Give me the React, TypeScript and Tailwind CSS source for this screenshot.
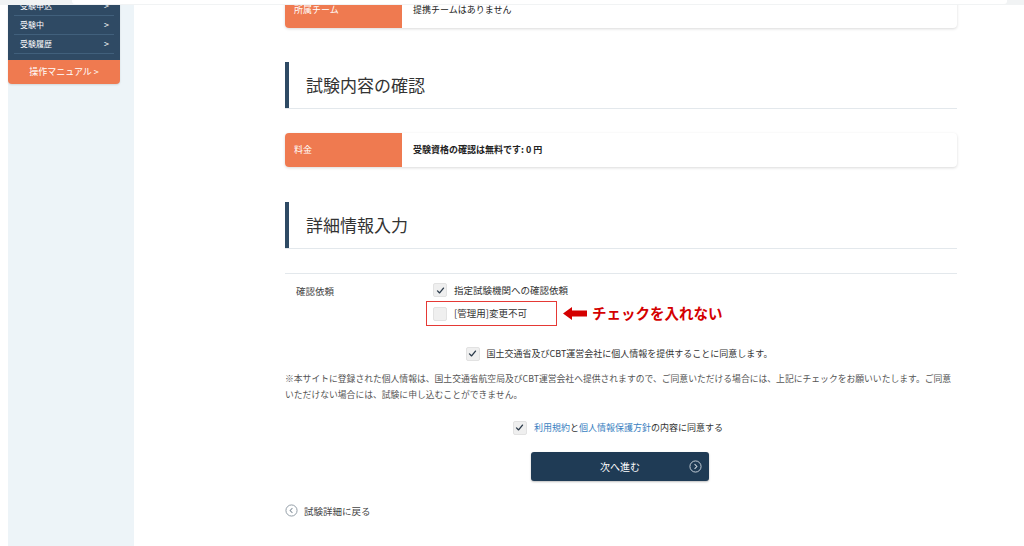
import React from "react";

const jp = {
  fontFamily: '"Noto Sans CJK JP", "Noto Sans", "Liberation Sans", sans-serif',
};

const Check = ({ checked }: { checked: boolean }) => (
  <span className="flex h-[14px] w-[14px] shrink-0 items-center justify-center rounded-[2px] border border-[#e2e2e2] bg-[#efefef]">
    {checked && (
      <svg viewBox="0 0 12 12" className="h-[9px] w-[9px]">
        <polyline
          points="2,6.5 4.8,9.2 10,2.8"
          fill="none"
          stroke="#2b3a4a"
          strokeWidth="1.8"
          strokeLinecap="round"
          strokeLinejoin="round"
        />
      </svg>
    )}
  </span>
);

const Heading = ({ title }: { title: string }) => (
  <div className="flex h-[47px] items-center border-b border-[#e3e8ec]">
    <div className="h-full w-[4px] bg-[#2e4a64]" />
    <h2 className="pl-[17px] text-[17px] font-normal text-[#333]">{title}</h2>
  </div>
);

const InfoCard = ({ label, children, className }: { label: string; children: React.ReactNode; className?: string }) => (
  <div className={`flex h-[34px] overflow-hidden rounded-[4px] bg-white shadow-[0_1px_3px_rgba(0,0,0,0.15)] ${className ?? ""}`}>
    <div className="flex w-[117px] items-center bg-[#ef7a50] pl-[9px] text-[9px] text-white">{label}</div>
    <div className="flex items-center pl-[11px] text-[9px] text-[#222]">{children}</div>
  </div>
);

const navItems = ["受験申込", "受験中", "受験履歴"];

export default function App() {
  return (
    <div style={jp} className="relative h-[546px] w-[1024px] overflow-hidden bg-white">
      {/* browser chrome strip */}
      <div className="absolute left-0 top-0 z-10 h-[5px] w-full bg-[#f1f3f4]">
        <div className="ml-[72px] h-[4px] w-[935px] rounded-b-[3px] bg-white" />
      </div>

      <div className="flex h-full">
        <div className="w-[8px]" />
        <aside className="h-full w-[126px] bg-[#edf4f8]">
          <div className="w-[112px] rounded-b-[4px] bg-[#ef7a50] shadow-[0_1px_2px_rgba(0,0,0,0.12)]">
            <div className="mt-[-3px] bg-[#2f4a64] px-[6px] pb-[6px]">
              {navItems.map((n) => (
                <div key={n} className="flex h-[19px] items-center justify-between border-b border-[#41607c] pl-[6px] pr-[5px] text-[8px] text-white">
                  <span>{n}</span>
                  <span className="text-[9px]">&gt;</span>
                </div>
              ))}
            </div>
            <div className="flex h-[24px] items-center justify-center text-[9px] text-white">操作マニュアル &gt;</div>
          </div>
        </aside>

        <main className="ml-[151px] w-[672px]">
          <InfoCard label="所属チーム" className="mt-[-9px] h-[37px]">
            提携チームはありません
          </InfoCard>

          <div className="mt-[34px]">
            <Heading title="試験内容の確認" />
          </div>

          <InfoCard label="料金" className="mt-[24px]">
            <span className="font-bold">受験資格の確認は無料です: 0 円</span>
          </InfoCard>

          <div className="mt-[35px]">
            <Heading title="詳細情報入力" />
          </div>

          <div className="mt-[24px] border-t border-[#e3e8ec] pt-[9px]">
            <div className="flex">
              <div className="w-[148px] pl-[11px] pt-[1px] text-[9.5px] leading-[14px] text-[#444]">確認依頼</div>
              <div className="flex flex-col gap-[9px]">
                <div className="flex items-center gap-[7px] text-[9.5px] text-[#333]">
                  <Check checked />
                  <span>指定試験機関への確認依頼</span>
                </div>
                <div className="flex items-center">
                  <div className="relative flex items-center gap-[7px] text-[9.5px] text-[#333]">
                    <div className="pointer-events-none absolute left-[-7px] top-[-5px] h-[25px] w-[131px] border-[1.5px] border-[#e53935]" />
                    <Check checked={false} />
                    <span>[管理用]変更不可</span>
                  </div>
                  <div className="ml-[36px] flex items-center gap-[5px]">
                    <svg viewBox="0 0 24 13" className="h-[13px] w-[24px]">
                      <polygon points="0,6.5 9,0 9,3.5 24,3.5 24,9.5 9,9.5 9,13" fill="#d40000" />
                    </svg>
                    <span className="text-[14.5px] font-bold leading-none text-[#d40000]">チェックを入れない</span>
                  </div>
                </div>
              </div>
            </div>

            <div className="mt-[26px] flex items-center justify-center gap-[7px] pr-[4px] text-[9px] text-[#333]">
              <Check checked />
              <span>国土交通省及びCBT運営会社に個人情報を提供することに同意します。</span>
            </div>

            <p className="mt-[10px] text-[8.8px] leading-[16px] text-[#555]">
              ※本サイトに登録された個人情報は、国土交通省航空局及びCBT運営会社へ提供されますので、ご同意いただける場合には、上記にチェックをお願いいたします。ご同意いただけない場合には、試験に申し込むことができません。
            </p>

            <div className="mt-[18px] flex items-center justify-center gap-[7px] pr-[6px] text-[9px] text-[#333]">
              <Check checked />
              <span>
                <span className="text-[#3a7fc1]">利用規約</span>と<span className="text-[#3a7fc1]">個人情報保護方針</span>の内容に同意する
              </span>
            </div>

            <div className="mt-[17px] flex justify-center pr-[2px]">
              <button className="relative flex h-[29px] w-[178px] items-center justify-center rounded-[3px] bg-[#1f3b55] text-[10px] text-white shadow-[0_1px_2px_rgba(0,0,0,0.25)]">
                次へ進む
                <svg viewBox="0 0 14 14" className="absolute right-[7px] h-[13px] w-[13px]">
                  <circle cx="7" cy="7" r="6" fill="none" stroke="#cfd8e0" strokeWidth="1" />
                  <polyline points="6,4.5 8.5,7 6,9.5" fill="none" stroke="#cfd8e0" strokeWidth="1.1" />
                </svg>
              </button>
            </div>

            <div className="mt-[23px] flex items-center gap-[6px] text-[9.5px] text-[#444]">
              <svg viewBox="0 0 14 14" className="h-[13px] w-[13px]">
                <circle cx="7" cy="7" r="6" fill="none" stroke="#8a96a0" strokeWidth="1" />
                <polyline points="8,4.5 5.5,7 8,9.5" fill="none" stroke="#8a96a0" strokeWidth="1.1" />
              </svg>
              <span>試験詳細に戻る</span>
            </div>
          </div>
        </main>
      </div>
    </div>
  );
}
